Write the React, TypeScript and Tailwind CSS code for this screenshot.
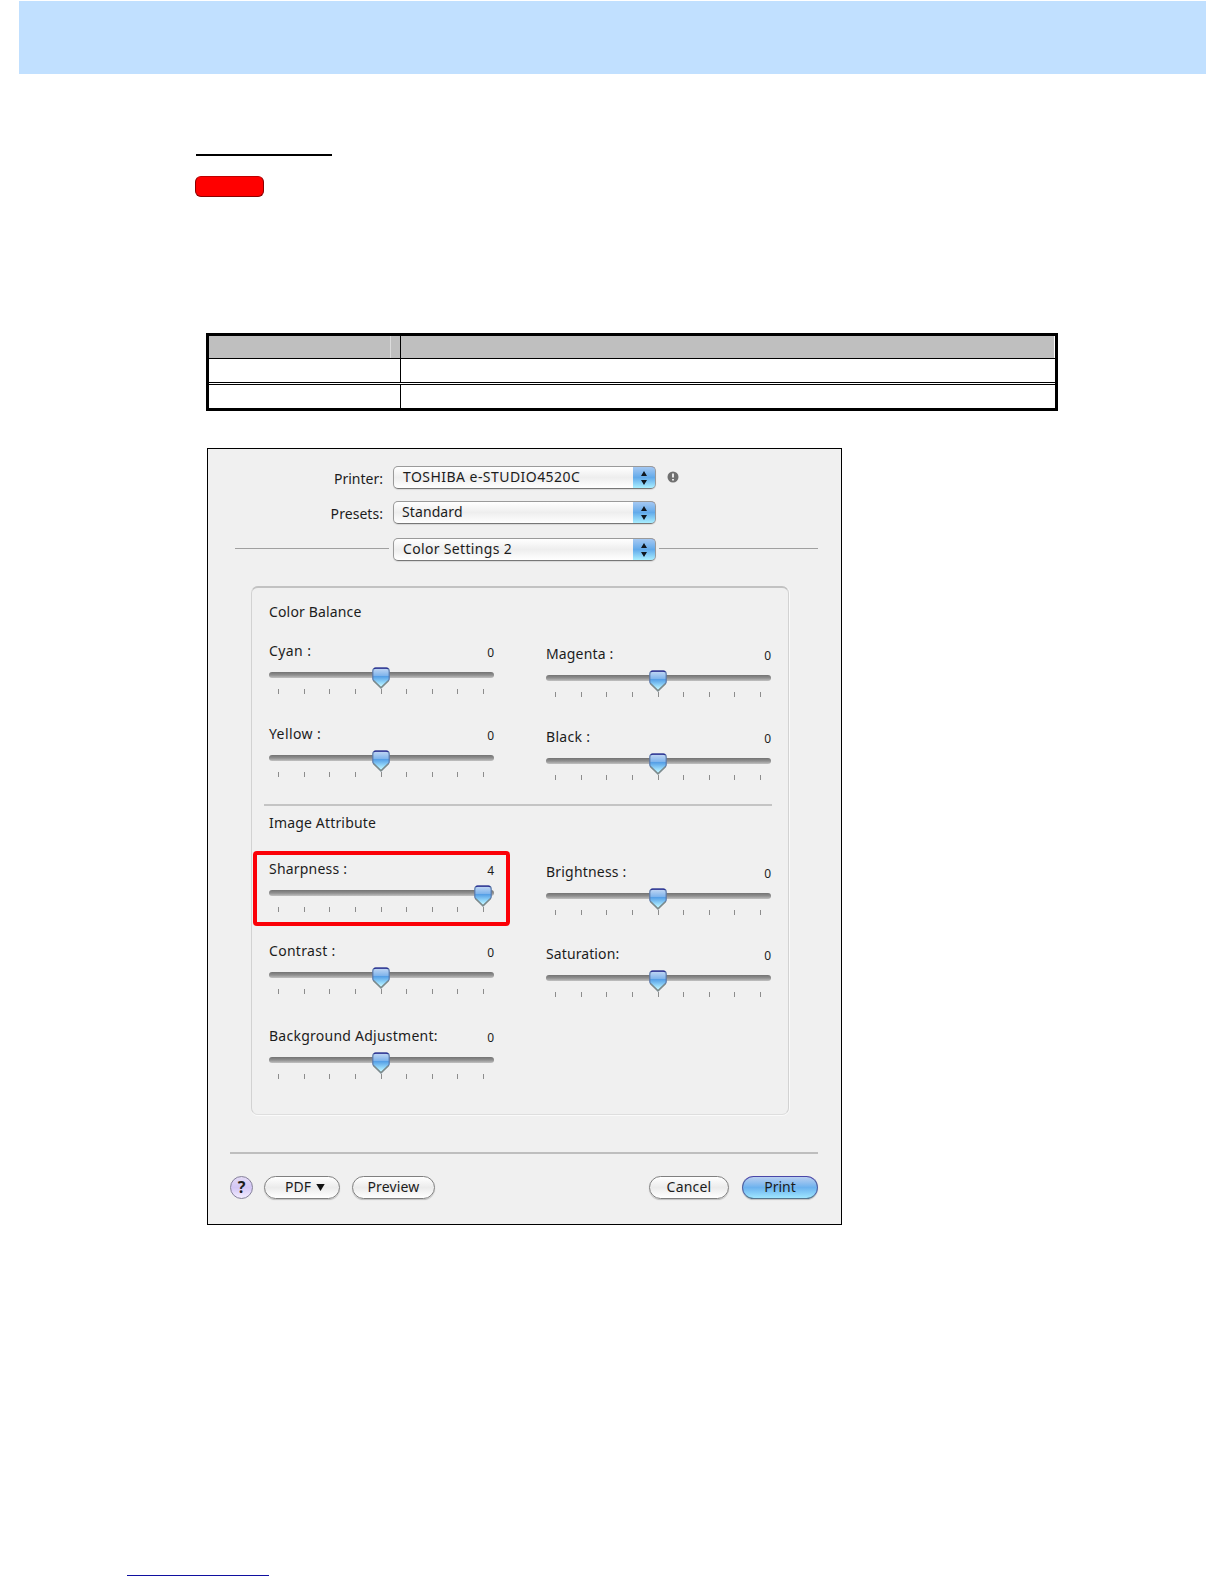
import { clsx } from 'clsx'

interface SliderProps {
    label: string
    value: number
    tracking?: string
    highlighted?: boolean
}

interface PopupProps {
    text: string
    className?: string
}

const TICKS = [-4, -3, -2, -1, 0, 1, 2, 3, 4]

function Thumb() {
    return (
        <svg width="20" height="22" viewBox="0 0 20 22" className="block">
            <defs>
                <linearGradient id="thumb" x1="0" y1="0" x2="0" y2="1">
                    <stop offset="0" stopColor="#c3d8f4" />
                    <stop offset="0.38" stopColor="#7fb4ec" />
                    <stop offset="0.42" stopColor="#559fe6" />
                    <stop offset="0.75" stopColor="#9adcfb" />
                    <stop offset="1" stopColor="#d8ffff" />
                </linearGradient>
            </defs>
            <path d="M4.600 1.200h10.800q2.800 0 2.800 2.800v7.800q0 1-.8 1.900L10 21l-7.400-7.300q-.8-.9-.8-1.900V4q0-2.800 2.800-2.800z" fill="url(#thumb)" stroke="#5b78a8" strokeWidth="1.200" />
            <path d="M2.600 13.700L10 20.800l7.400-7.100" fill="none" stroke="#7f8c88" strokeWidth="1.300" />
            <path d="M3 1.700q.6-.6 1.600-.6h10.800q1 0 1.600.6" fill="none" stroke="#2b2d92" strokeWidth="1.400" />
        </svg>
    )
}

function Slider({ label, value, tracking, highlighted }: SliderProps) {
    return (
        <div className="relative w-[225px] h-[55px]">
            <div className="flex justify-between h-5 leading-5">
                <span className={tracking}>{label}</span>
                <span className="text-[12px] leading-[23px]">{value}</span>
            </div>
            <div className="relative mt-[11px] h-[6px] rounded-full bg-linear-to-b from-[#737373] via-[#8f8f8f] to-[#c2c2c2]">
                <div className="absolute -top-[5px]" style={{ left: 102 + value * 25.5 }}>
                    <Thumb />
                </div>
            </div>
            <div className="flex justify-between mt-[11px] pl-[9px] pr-[10px]">
                {TICKS.map((tick) => (
                    <div key={tick} className="w-px h-[5px] bg-[#8c8c8c]" />
                ))}
            </div>
            {highlighted && (
                <div className="absolute -left-[16px] -right-[16px] -top-[8px] -bottom-[12px] border-4 border-[#fb0007] rounded-[4px]" />
            )}
        </div>
    )
}

function Popup({ text, className }: PopupProps) {
    return (
        <div className="flex w-[263px] h-[23px] rounded-[5px] border border-[#9a9a9a] border-b-[#777777] overflow-hidden bg-linear-to-b from-white via-[#eeeeee] to-white shadow-[0_1px_1px_rgba(0,0,0,0.1)]">
            <span className={clsx('flex-1 leading-5', className)}>{text}</span>
            <div className="flex items-center justify-center w-[23px] -my-px -mr-px border-t border-t-[#2c3593] border-b border-b-[#5b7d95] border-r border-r-[#5879ad] rounded-r-[5px] bg-linear-to-b from-[#a4c8f2] via-[#62aaea] to-[#a9efff]">
                <svg width="6" height="14" viewBox="0 0 6 14">
                    <path d="M3 0l3 5H0zM3 14L0 9h6z" fill="#101820" />
                </svg>
            </div>
        </div>
    )
}

const BUTTON = 'flex items-center justify-center h-[23px] rounded-full border leading-5 pb-px'
const PLAIN = 'border-[#808080] bg-linear-to-b from-white via-[#ebebeb] to-white shadow-[0_1px_1px_rgba(0,0,0,0.2)]'

export default function App() {
    return (
        <div className="flex flex-col w-[1224px] h-[1584px] bg-white overflow-hidden font-['Noto_Sans','Open_Sans',sans-serif] text-[14px] text-[#1c1c1c]">
            <div className="mt-px ml-[19px] w-[1187px] h-[73px] shrink-0 bg-[#c1e0ff]" />
            <div className="mt-[80px] ml-[196px] w-[136px] h-[2px] shrink-0 bg-black" />
            <div className="mt-5 ml-[195px] w-[69px] h-[21px] shrink-0 rounded-[6px] border border-[#8a0000] border-t-[#c00000] bg-[#ff0000]" />

            <div className="mt-[136px] ml-[206px] w-[852px] h-[78px] shrink-0 border-[3px] border-black">
                <div className="flex h-[23px] border-b border-black pr-px">
                    <div className="w-[181px] bg-[#bfbfbf]" />
                    <div className="w-px bg-[#dcdcdc]" />
                    <div className="w-[9px] bg-[#bfbfbf]" />
                    <div className="w-px bg-black" />
                    <div className="flex-1 bg-[#bfbfbf]" />
                </div>
                <div className="flex h-6 border-b border-black">
                    <div className="w-[192px] border-r border-black" />
                </div>
                <div className="mt-px flex h-6 border-t border-black">
                    <div className="w-[192px] border-r border-black" />
                </div>
            </div>

            <div className="mt-[37px] ml-[207px] w-[635px] h-[777px] shrink-0 flex flex-col border border-black bg-[#f0f0f0]">
                <div className="flex items-center mt-[17px] h-[23px]">
                    <span className="w-[175px] mr-[10px] pt-[2px] text-right leading-5">Printer:</span>
                    <Popup text="TOSHIBA e-STUDIO4520C" className="pl-[9px] tracking-[0.45px]" />
                    <svg width="12" height="12" viewBox="0 0 12 12" className="ml-[11px] mb-px">
                        <circle cx="6" cy="6" r="5.500" fill="#707070" />
                        <path d="M6 2.500v4M6 8v1.600" stroke="#f4f4f4" strokeWidth="1.800" />
                    </svg>
                </div>
                <div className="flex items-center mt-3 h-[23px]">
                    <span className="w-[175px] mr-[10px] pt-[2px] text-right leading-5 tracking-[0.05px]">Presets:</span>
                    <Popup text="Standard" className="pl-[8px] tracking-[0.1px]" />
                </div>
                <div className="flex mt-[14px] h-[23px]">
                    <div className="mt-[10px] ml-[27px] mr-[4px] w-[154px] h-px bg-[#a0a0a0]" />
                    <Popup text="Color Settings 2" className="pl-[9px] tracking-[0.33px]" />
                    <div className="mt-[10px] ml-[3px] w-[159px] h-px bg-[#a0a0a0]" />
                </div>

                <div className="mt-[25px] ml-[43px] w-[538px] h-[529px] shrink-0 rounded-[7px] border-t-2 border-x border-b border-t-[#c2c2c2] border-x-[#d2d2d2] border-b-[#dedede] shadow-[0_1px_0_#fafafa,1px_0_0_#fafafa]">
                    <div className="mt-[14px] ml-[17px] h-5 leading-5 tracking-[0.15px]">Color Balance</div>
                    <div className="flex mt-[19px] ml-[17px] gap-[52px]">
                        <div className="flex flex-col gap-[28px]">
                            <Slider label="Cyan :" value={0} tracking="tracking-[0.4px]" />
                            <Slider label="Yellow :" value={0} tracking="tracking-[0.4px]" />
                        </div>
                        <div className="flex flex-col gap-[28px] pt-[3px]">
                            <Slider label="Magenta :" value={0} tracking="tracking-[0.15px]" />
                            <Slider label="Black :" value={0} tracking="tracking-[0.3px]" />
                        </div>
                    </div>
                    <div className="mt-[22px] ml-[12px] w-[508px] h-[2px] bg-[#c4c4c4]" />
                    <div className="mt-[7px] ml-[17px] h-5 leading-5 tracking-[0.17px]">Image Attribute</div>
                    <div className="flex mt-[26px] ml-[17px] gap-[52px]">
                        <div className="flex flex-col">
                            <Slider label="Sharpness :" value={4} tracking="tracking-[0.2px]" highlighted />
                            <div className="mt-[27px]">
                                <Slider label="Contrast :" value={0} tracking="tracking-[0.3px]" />
                            </div>
                            <div className="mt-[30px]">
                                <Slider label="Background Adjustment:" value={0} tracking="tracking-[0.25px]" />
                            </div>
                        </div>
                        <div className="flex flex-col gap-[27px] pt-[3px]">
                            <Slider label="Brightness :" value={0} tracking="tracking-[0.2px]" />
                            <Slider label="Saturation:" value={0} tracking="tracking-[0.1px]" />
                        </div>
                    </div>
                </div>

                <div className="mt-[37px] ml-[22px] w-[588px] h-[2px] shrink-0 bg-[#bebebe]" />
                <div className="flex mt-[22px] ml-[22px] w-[588px]">
                    <button className={clsx(BUTTON, 'w-[23px] border-[#85809a] bg-linear-to-b from-[#e4dbf6] via-[#d3c6f5] to-[#f3edff] text-[16px] font-bold')}>?</button>
                    <button className={clsx(BUTTON, PLAIN, 'ml-[11px] w-[76px] pl-[6px] gap-[5px]')}>
                        PDF
                        <svg width="9" height="7" viewBox="0 0 9 7">
                            <path d="M.3 0h8.400L4.500 7z" fill="#111" />
                        </svg>
                    </button>
                    <button className={clsx(BUTTON, PLAIN, 'ml-3 w-[83px] tracking-[0.15px]')}>Preview</button>
                    <button className={clsx(BUTTON, PLAIN, 'ml-auto w-[80px] tracking-[0.2px]')}>Cancel</button>
                    <button className={clsx(BUTTON, 'ml-[13px] w-[76px] border-[#4d5fa0] border-t-[#4a46a8] border-b-[#55768f] bg-linear-to-b from-[#b9cff0] via-[#6cb2ee] to-[#9fe6ff] shadow-[0_1px_1px_rgba(0,0,0,0.2)]')}>Print</button>
                </div>
            </div>

            <div className="mt-[350px] ml-[127px] w-[142px] h-px shrink-0 bg-[#1010a0]" />
        </div>
    )
}
